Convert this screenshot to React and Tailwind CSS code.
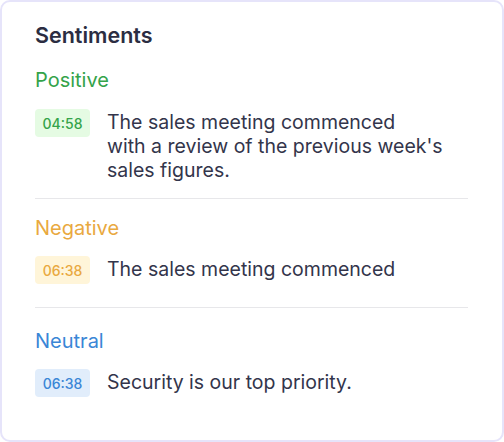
const sections = [
  {
    label: "Positive",
    labelColor: "text-[#34a34a]",
    badge: "bg-[#e5fbe3] text-[#34a34a]",
    wrap: "pt-[18px] pb-[16px] border-b border-[#e7e7ea]",
    itemGap: "mt-[16px]",
    items: [
      {
        time: "04:58",
        lines: [
          "The sales meeting commenced",
          "with a review of the previous week's",
          "sales figures.",
        ],
      },
    ],
  },
  {
    label: "Negative",
    labelColor: "text-[#e9a93f]",
    badge: "bg-[#fff5d9] text-[#e9a93f]",
    wrap: "pt-[16px] pb-[23px] border-b border-[#e7e7ea]",
    itemGap: "mt-[15px]",
    items: [{ time: "06:38", lines: ["The sales meeting commenced"] }],
  },
  {
    label: "Neutral",
    labelColor: "text-[#3a86d6]",
    badge: "bg-[#e1edfb] text-[#3a86d6]",
    wrap: "pt-[20px]",
    itemGap: "mt-[15px]",
    items: [{ time: "06:38", lines: ["Security is our top priority."] }],
  },
];

export default function App() {
  return (
    <div
      className="w-[504px] h-[442px] bg-white"
      style={{ fontFamily: "Inter, 'Noto Sans', sans-serif" }}
    >
      <div className="h-full w-full rounded-[10px] border-2 border-[#e6e4fa] pl-[33px] pr-[34px] pt-[19px]">
        <h2 className="text-[21.5px] leading-[28px] font-semibold text-[#2b2d42]">
          Sentiments
        </h2>

        {sections.map((section) => (
          <div key={section.label} className={section.wrap}>
            <h3 className={`text-[20px] leading-[26px] ${section.labelColor}`}>
              {section.label}
            </h3>
            {section.items.map((item) => (
              <div
                key={item.time}
                className={`flex items-start gap-[17px] ${section.itemGap}`}
              >
                <span
                  className={`shrink-0 rounded-[4px] w-[55px] h-[28px] flex items-center justify-center text-[14px] font-medium ${section.badge}`}
                >
                  {item.time}
                </span>
                <p className="text-[19.5px] leading-[24px] text-[#33354b] pt-[1px]">
                  {item.lines.map((line, i) => (
                    <span key={i}>
                      {line}
                      {i < item.lines.length - 1 && <br />}
                    </span>
                  ))}
                </p>
              </div>
            ))}
          </div>
        ))}
      </div>
    </div>
  );
}
